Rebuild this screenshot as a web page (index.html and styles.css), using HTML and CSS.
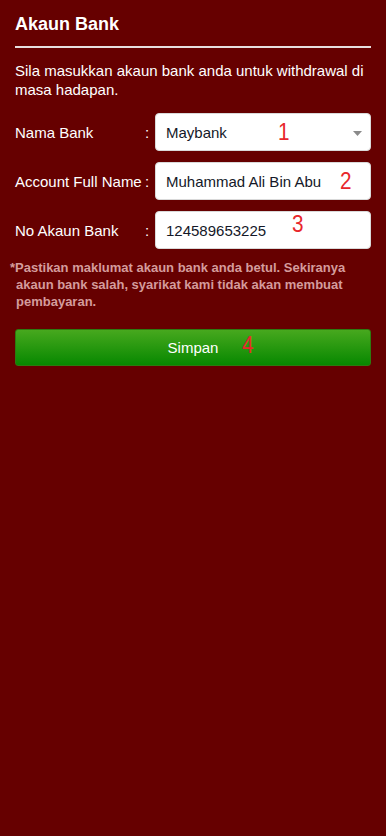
FILE: index.html
```html
<!DOCTYPE html>
<html lang="ms">
<head>
<meta charset="utf-8">
<title>Akaun Bank</title>
<link rel="stylesheet" href="styles.css">
</head>
<body>
<main class="page">
  <h1 class="title">Akaun Bank</h1>
  <p class="desc">Sila masukkan akaun bank anda untuk withdrawal di masa hadapan.</p>
  <form class="form">
    <div class="row">
      <span class="label">Nama Bank</span>
      <span class="colon">:</span>
      <div class="field">
        <div class="input select">Maybank
          <svg class="caret" width="9" height="5" viewBox="0 0 9 5"><path d="M0 0H9L4.5 5Z" fill="#8a8a8a"/></svg>
        </div>
        <span class="mark m1">1</span>
      </div>
    </div>
    <div class="row">
      <span class="label">Account Full Name</span>
      <span class="colon">:</span>
      <div class="field">
        <div class="input">Muhammad Ali Bin Abu</div>
        <span class="mark m2">2</span>
      </div>
    </div>
    <div class="row">
      <span class="label">No Akaun Bank</span>
      <span class="colon">:</span>
      <div class="field">
        <div class="input">124589653225</div>
        <span class="mark m3">3</span>
      </div>
    </div>
    <p class="note">*Pastikan maklumat akaun bank anda betul. Sekiranya akaun bank salah, syarikat kami tidak akan membuat pembayaran.</p>
    <div class="btnwrap">
      <button type="button" class="btn">Simpan</button>
      <span class="mark m4">4</span>
    </div>
  </form>
</main>
</body>
</html>
```
FILE: styles.css
```css
html, body {
  margin: 0;
  padding: 0;
  background: #660000;
}
body {
  font-family: "Liberation Sans", Arial, sans-serif;
  color: #fff;
  min-height: 836px;
}
.page {
  padding: 13px 15px 0 15px;
}
.title {
  margin: 0;
  font-size: 18px;
  line-height: 22px;
  font-weight: bold;
  padding-bottom: 11px;
  border-bottom: 2px solid #e6dede;
}
.desc {
  margin: 13px 0 0 0;
  font-size: 15px;
  line-height: 19px;
}
.form {
  margin-top: 14px;
  display: flex;
  flex-direction: column;
  gap: 11px;
}
.row {
  display: flex;
  align-items: center;
  height: 38px;
}
.label {
  width: 130px;
  font-size: 15px;
}
.colon {
  width: 4px;
  margin-right: 6px;
  font-size: 15px;
}
.field {
  position: relative;
  flex: 1;
  height: 38px;
}
.input {
  box-sizing: border-box;
  height: 38px;
  background: #fff;
  border-radius: 4px;
  border: 1px solid #d9d9d9;
  padding: 0 10px;
  display: flex;
  align-items: center;
  font-size: 15px;
  color: #141828;
}
.select {
  position: relative;
}
.caret {
  position: absolute;
  right: 8px;
  top: 17px;
}
.mark {
  position: absolute;
  font-family: "Liberation Sans", Arial, sans-serif;
  font-size: 23px;
  line-height: 23px;
  color: #e8262b;
  font-weight: normal;
  transform: scaleX(0.9);
  transform-origin: left top;
}
.m1 { left: 123px; top: 8px; }
.m2 { left: 185px; top: 8px; }
.m3 { left: 137px; top: 2px; }
.m4 { left: 227px; top: 5px; }
.note {
  margin: -1px 0 0 0;
  padding: 0 0 0 1px;
  text-indent: -6px;
  font-size: 13px;
  line-height: 17px;
  font-weight: bold;
  color: #d49c9c;
}
.btnwrap {
  position: relative;
  margin-top: 8px;
}
.btn {
  display: block;
  width: 100%;
  height: 37px;
  border: 1px solid #2d7a10;
  border-radius: 3px;
  background: linear-gradient(#47a81e, #078800);
  color: #fff;
  font-family: "Liberation Sans", Arial, sans-serif;
  font-size: 15px;
  cursor: pointer;
}
```
